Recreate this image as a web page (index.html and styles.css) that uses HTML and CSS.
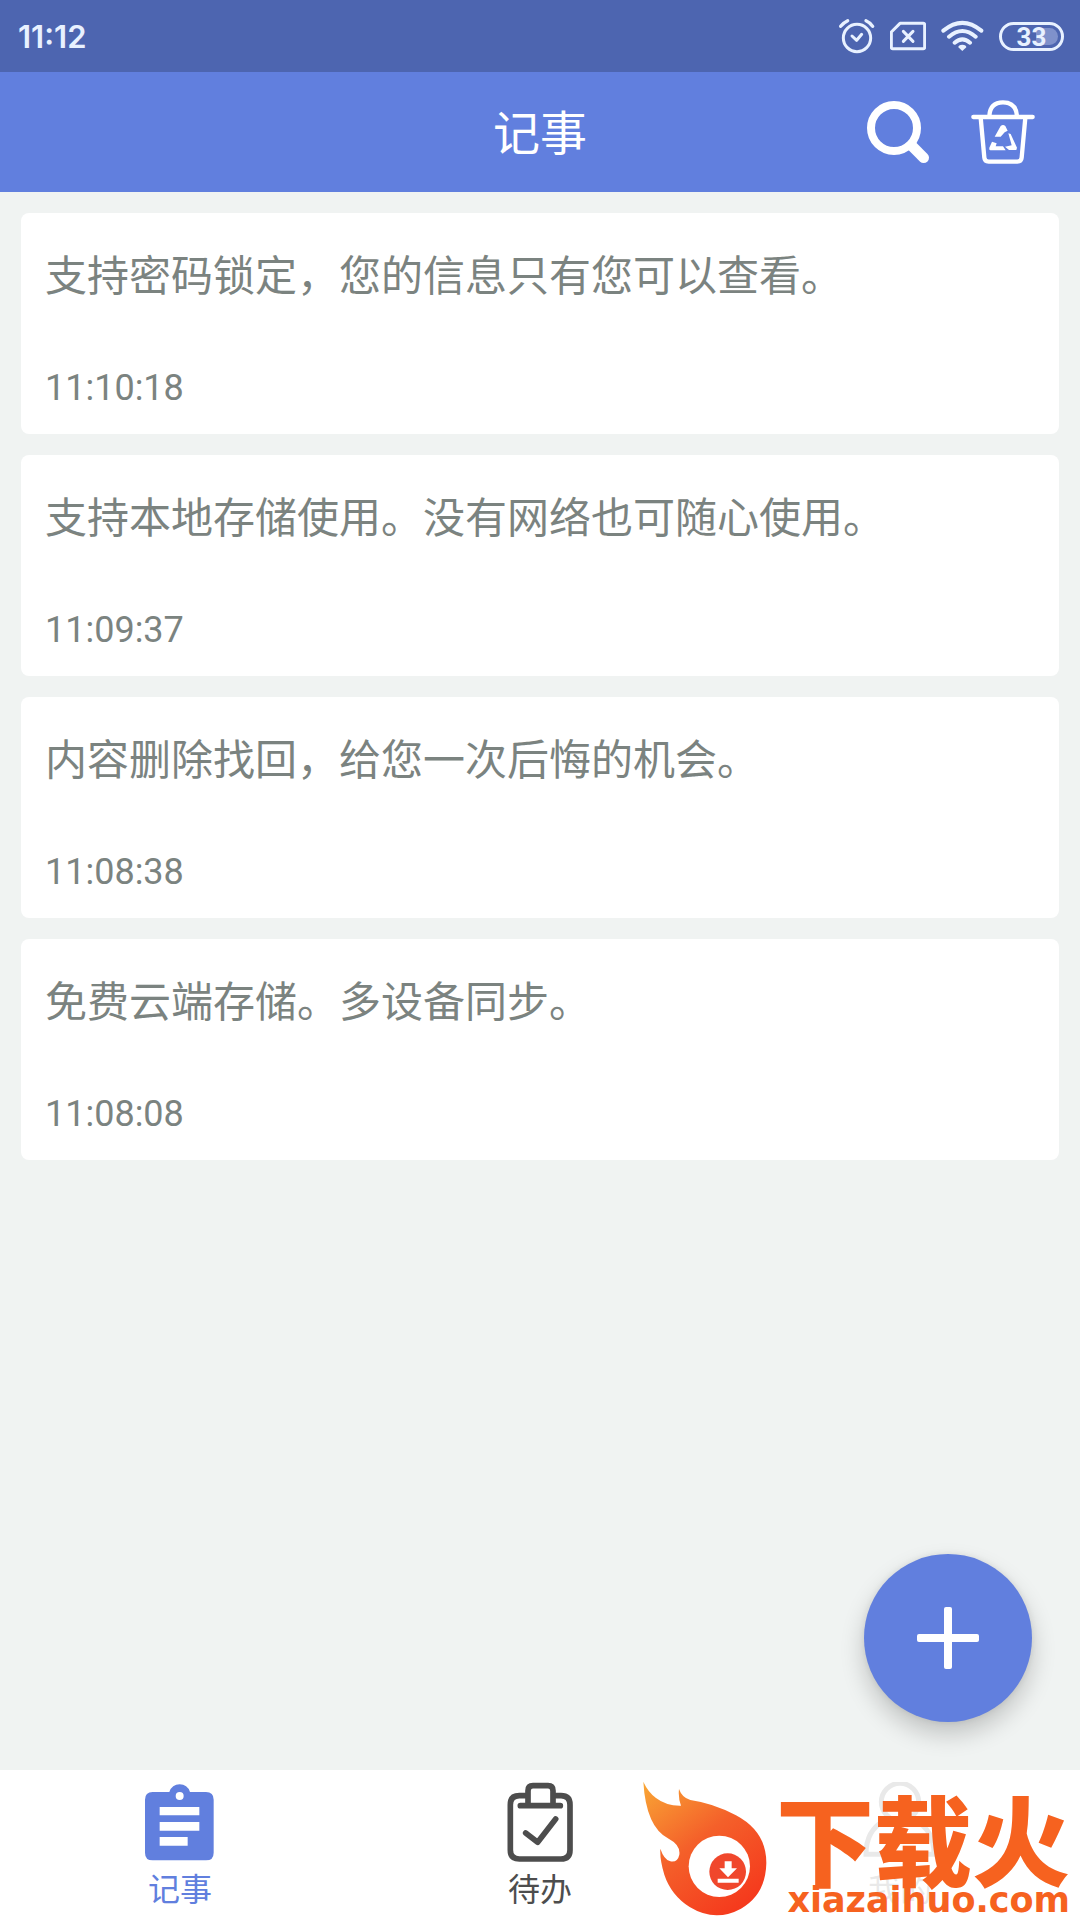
FILE: index.html
```html
<!DOCTYPE html>
<html lang="zh-CN">
<head>
  <meta charset="UTF-8" />
  <meta name="viewport" content="width=device-width, initial-scale=1.0" />
  <title>记事</title>
  <link rel="stylesheet" href="styles.css">
</head>
<body>
  <div class="status-bar">
    <span class="clock">11:12</span>
    <div class="status-icons">
      <svg class="icon-alarm" viewBox="57 54 111 108" fill="none" stroke="currentColor" stroke-width="9" stroke-linecap="round" stroke-linejoin="round">
        <circle cx="114" cy="114" r="41" />
        <path d="M99 108l14 13 15-18" />
        <path d="M65 79q8-11 21-17M141 62q12 5 20 17" stroke-width="10" />
      </svg>
      <svg class="icon-sim" viewBox="210 54 108 108" fill="none" stroke="currentColor" stroke-width="9" stroke-linecap="round" stroke-linejoin="round">
        <path d="M240 70h70q4 0 4 4v68q0 4-4 4h-92q-4 0-4-4V96z" />
        <path d="M250 94l29 30M279 94l-29 30" />
      </svg>
      <svg class="icon-wifi" viewBox="362 54 129 108" fill="none" stroke="currentColor" stroke-width="12" stroke-linecap="round">
        <path d="M369 92q57-47 114 0M386 110q40-34 80 0M403 128q23-20 46 0" />
        <path d="M426 153l-12-11q0-8 12-8t12 8z" fill="currentColor" stroke="none" />
      </svg>
      <span class="battery">33</span>
    </div>
  </div>

  <header class="app-bar">
    <h1>记事</h1>
    <div class="actions">
      <button type="button" aria-label="搜索">
        <svg viewBox="138 300 192 192" fill="none" stroke="currentColor" stroke-linecap="round">
          <circle cx="222" cy="384" r="69" stroke-width="24" />
          <path d="M276 438l35 35" stroke-width="32" />
        </svg>
      </button>
      <button type="button" aria-label="回收站">
        <svg viewBox="453 300 192 192" fill="none" stroke="currentColor" stroke-width="13" stroke-linecap="round" stroke-linejoin="round">
          <path d="M460 351h178M508 348q2-41 41-41t42 41" />
          <path d="M482 353l11 120q1 12 13 12h86q12 0 13-12l11-120" />
          <path d="M524 410l18-32q7-6 14 0l7 14-9 5-12 13zM565 400l7 2 19 41-2 7h-22l-12-10 20-4zM508 443l8-18 14 5-3 9h22l8 12h-46q-5-1-3-8z" fill="currentColor" stroke="none" />
        </svg>
      </button>
    </div>
  </header>

  <main class="note-list">
    <article class="note">
      <p>支持密码锁定，您的信息只有您可以查看。</p>
      <time>11:10:18</time>
    </article>
    <article class="note">
      <p>支持本地存储使用。没有网络也可随心使用。</p>
      <time>11:09:37</time>
    </article>
    <article class="note">
      <p>内容删除找回，给您一次后悔的机会。</p>
      <time>11:08:38</time>
    </article>
    <article class="note">
      <p>免费云端存储。多设备同步。</p>
      <time>11:08:08</time>
    </article>
  </main>

  <button class="add-btn" type="button" aria-label="新建">
    <svg viewBox="0 0 62 62" fill="currentColor">
      <rect x="27" y="0" width="8" height="62" rx="2" />
      <rect x="0" y="27" width="62" height="8" rx="2" />
    </svg>
  </button>

  <nav class="tab-bar">
    <a class="tab active" href="#notes">
      <svg viewBox="123 96 234 240">
        <path d="M158 126h50q8-23 31-23t31 23h48q23 0 23 23v159q0 23-23 23H158q-23 0-23-23V149q0-23 23-23z" fill="currentColor" />
        <path d="M179 171h119v25H179zM179 216h119v26H179zM179 261h84v26h-84z" fill="#fff" />
        <circle cx="239" cy="138" r="12" fill="#fff" />
      </svg>
      <span>记事</span>
    </a>
    <a class="tab" href="#todo">
      <svg viewBox="123 96 234 240" fill="none" stroke="currentColor" stroke-width="17" stroke-linecap="round" stroke-linejoin="round">
        <path d="M198 137h-20q-27 0-27 27v136q0 27 27 27h125q27 0 27-27V164q0-27-27-27h-18" />
        <path d="M181 167h120M204 164v-42q0-15 15-15h45q15 0 15 15v42M197 249l36 28 54-70" />
      </svg>
      <span>待办</span>
    </a>
    <a class="tab" href="#mine">
      <svg viewBox="123 96 234 240" fill="none" stroke="currentColor" stroke-width="15">
        <circle cx="240" cy="156" r="56" />
        <path d="M192 213q-54 28-54 100h204q0-72-54-100" />
      </svg>
      <span>我的</span>
    </a>
  </nav>

  <div class="watermark">
    <svg class="fireball" viewBox="30 60 390 408">
      <defs>
        <linearGradient id="fire" x1="0" y1="0" x2="0.7" y2="1">
          <stop offset="0" stop-color="#f9a735" />
          <stop offset="0.5" stop-color="#f4602a" />
          <stop offset="1" stop-color="#f53a1d" />
        </linearGradient>
      </defs>
      <path d="M40 65q14 31 38 49 31 24 75 23-9-25-6-50 9 26 34 33 70 10 137 46 92 49 91 144-2 94-76 136-77 42-154-5-56-36-76-97-14-45-12-78 11 33 30 38 22 4 27-20 4-29-32-48Q48 202 40 65z" fill="url(#fire)" />
      <circle cx="268" cy="319" r="92" fill="#fff" />
      <circle cx="293" cy="335" r="55" fill="#f0472c" />
      <path d="M284 304h21v21h16l-27 27-26-27h16zM263 356h63v12h-63z" fill="#fff" />
    </svg>
    <div class="brand">
      <span class="brand-name">下载火</span>
      <span class="brand-url">xiazaihuo.com</span>
    </div>
  </div>
</body>
</html>
```
FILE: styles.css
```css
* { box-sizing: border-box; }
body { position: relative; display: flex; flex-direction: column; min-height: 100vh; margin: 0; background: #f0f3f2; font-family: Roboto, "Noto Sans CJK SC", sans-serif; }
button { padding: 0; border: none; background: none; color: inherit; cursor: pointer; }
svg { display: block; }

.status-bar { display: flex; align-items: center; justify-content: space-between; height: 72px; padding: 0 16px 0 18px; background: #4d65b0; color: #e8f1ff; }
.clock { font-family: Inter, sans-serif; font-size: 31px; font-weight: 600; }
.status-icons { display: flex; align-items: center; gap: 15px; }
.status-icons svg { height: 36px; }
.battery { width: 65px; height: 29px; border: 3px solid #e8f1ff; border-radius: 15px; background: linear-gradient(90deg, transparent 58%, #7f91cb 58%) content-box; padding: 3px; font-size: 26px; font-weight: 700; line-height: 18px; text-align: center; }

.app-bar { display: grid; grid-template-columns: 1fr auto 1fr; align-items: center; height: 120px; padding: 0 45px; background: #617fde; color: #fff; }
.app-bar h1 { grid-column: 2; margin: 0; padding-top: 4px; font-size: 47px; font-weight: 400; line-height: 60px; }
.actions { display: flex; justify-content: flex-end; gap: 41px; }
.actions svg { width: 64px; height: 64px; }

.note-list { flex: 1; display: flex; flex-direction: column; gap: 21px; padding: 21px; }
.note { padding: 38px 24px 24px; border-radius: 8px; background: #fff; color: #7b8380; }
.note p { margin: 0 0 63px; font-size: 42px; line-height: 52px; }
.note time { display: block; font-size: 36px; line-height: 44px; }

.add-btn { position: absolute; right: 48px; bottom: 198px; display: flex; align-items: center; justify-content: center; width: 168px; height: 168px; border-radius: 50%; background: #617fde; color: #fff; box-shadow: 0 12px 24px rgba(0,0,0,0.2), 0 0 6px rgba(0,0,0,0.08); }
.add-btn svg { width: 62px; height: 62px; }

.tab-bar { display: flex; height: 150px; background: #fff; }
.tab { flex: 1; display: flex; flex-direction: column; align-items: center; padding-top: 12px; color: #4d4d4d; font-size: 32px; line-height: 44px; text-decoration: none; }
.tab svg { width: 78px; height: 80px; margin-bottom: 6px; }
.tab.active { color: #617fde; }

/* download site mark, lies over the last tab */
.watermark { position: absolute; right: 0; bottom: 0; display: flex; align-items: flex-end; padding: 0 10px 4px 0; background: rgba(255,255,255,0.88); color: #f6621f; }
.fireball { width: 130px; height: 136px; margin-right: 6px; }
.brand { display: flex; flex-direction: column; align-items: flex-end; }
.brand-name { font-family: "Noto Sans CJK SC", sans-serif; font-size: 98px; font-weight: 900; line-height: 96px; }
.brand-url { font-family: "DejaVu Sans", sans-serif; font-size: 35px; font-weight: 700; line-height: 32px; }
```
